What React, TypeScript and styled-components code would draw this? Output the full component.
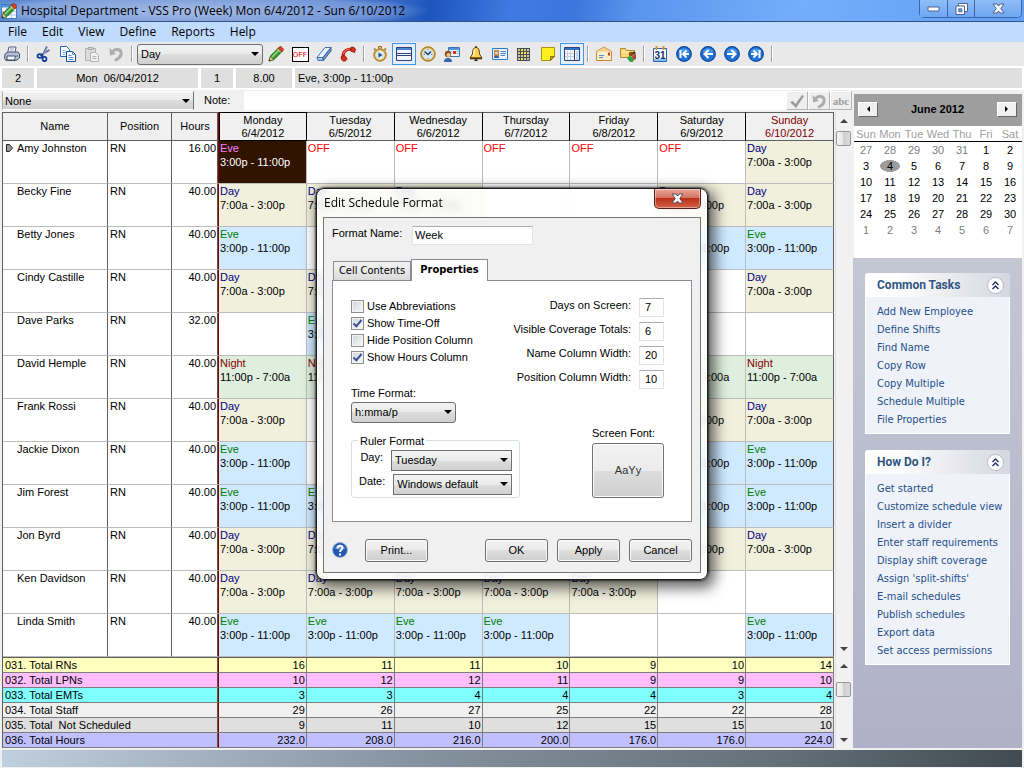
import React from "react";
import styled, { createGlobalStyle, css } from "styled-components";

const grid = '"Liberation Sans", Arial, sans-serif';
const segoe = '"Open Sans", "Noto Sans", sans-serif';
const tahoma = '"DejaVu Sans Condensed", "Noto Sans", sans-serif';
const headingFont = 'Roboto, "Noto Sans", sans-serif';

const GlobalStyle = createGlobalStyle`
  *, *::before, *::after { box-sizing: border-box; }
  body { margin: 0; background: #f0f0f0; color: #000; font: 11px/14px ${grid}; }
  button, input, select { font: inherit; color: inherit; margin: 0; }
  button { padding: 0; }
`;

/* ---------- window frame ---------- */

const Window = styled.div`
  position: relative;
  display: flex;
  flex-direction: column;
  min-height: 100vh;
  overflow: hidden;
`;

const TitleBar = styled.header`
  display: flex;
  height: 22px;
  padding-left: 1px;
  border-bottom: 1px solid #34507f;
  background:
    radial-gradient(ellipse 230px 18px at 200px 11px, rgba(255, 255, 255, 0.5), rgba(255, 255, 255, 0.25) 80%, transparent),
    linear-gradient(100deg, #5b86d0 0%, #3a6cc8 38%, #1d55bd 42%, #3f7be0 50%, #3b76dc 56%, #5a95ee 62%, #74aefa 78%, #5f9ff5 100%);
`;

const TitleText = styled.h1`
  flex: 1;
  margin: 0;
  padding-left: 4px;
  font: 12px/21px ${segoe};
  white-space: nowrap;
`;

const CaptionButtons = styled.div`
  display: flex;
  height: 18px;
  margin-right: 2px;
  border: 1px solid #3c66a4;
  border-top: 0;
  border-radius: 0 0 5px 5px;
  box-shadow: inset 0 -1px 0 #a7cbfb;
`;

const CaptionButton = styled.button<{ $wide?: boolean }>`
  display: grid;
  place-items: center;
  width: ${(p) => (p.$wide ? 47 : 27)}px;
  border: 0;
  background: linear-gradient(#8fbdf8, #6ea6f2);
  & + & { border-left: 1px solid #3c66a4; }
  &:last-child { border-radius: 0 0 5px 0; }
`;

const MenuBar = styled.nav`
  display: flex;
  gap: 15px;
  height: 20px;
  padding-left: 8px;
  background: #bfdbff;
`;

const MenuItem = styled.button`
  border: 0;
  background: none;
  font: 12px/20px ${segoe};
`;

/* ---------- toolbar ---------- */

const Toolbar = styled.div`
  display: flex;
  align-items: center;
  height: 24px;
  background: #e9e9e9;
`;

const ToolButton = styled.button<{ $on?: boolean }>`
  display: grid;
  place-items: center;
  width: 24px;
  height: 22px;
  border: 1px solid ${(p) => (p.$on ? "#3f97f0" : "transparent")};
  background: ${(p) => (p.$on ? "#e4effb" : "none")};
`;

const Separator = styled.span`
  width: 2px;
  height: 16px;
  margin: 0 3px;
  border-left: 1px solid #a5a5a5;
  border-right: 1px solid #fff;
`;

const OffBadge = styled.span`
  width: 17px;
  height: 15px;
  border: 1px solid #000;
  background: #fff;
  color: #e80000;
  font: 8px/13px Roboto, sans-serif;
  text-align: center;
`;

const SelectBox = styled.span<{ $width: number; $square?: boolean }>`
  position: relative;
  display: block;
  width: ${(p) => p.$width}px;
  &::after {
    content: "";
    position: absolute;
    right: 4px;
    top: 50%;
    margin-top: -2px;
    border: 4px solid transparent;
    border-top-color: #000;
    border-bottom: 0;
    pointer-events: none;
  }
  select {
    appearance: none;
    display: block;
    width: 100%;
    height: 21px;
    padding: 0 16px 0 3px;
    border: 1px solid #707070;
    border-radius: ${(p) => (p.$square ? 0 : 3)}px;
    background: linear-gradient(#f2f2f2, #ebebeb 50%, #dddddd 50%, #cfcfcf);
    line-height: 18px;
  }
`;

const ToolSelect = styled(SelectBox)`
  margin: 0 1px;
`;

const InfoBar = styled.div`
  display: flex;
  gap: 3px;
  padding: 2px;
  background: #fff;
`;

const InfoCell = styled.div<{ $width?: number }>`
  ${(p) => (p.$width ? css`width: ${p.$width}px; text-align: center;` : css`flex: 1; padding-left: 3px;`)}
  background: #dfdfdf;
  line-height: 20px;
  white-space: pre;
`;

/* ---------- content ---------- */

const Content = styled.div`
  display: flex;
  flex: 1;
`;

const Main = styled.main`
  flex: 1;
  min-width: 0;
`;

const NoteBar = styled.div`
  display: flex;
  align-items: stretch;
  height: 22px;
  padding: 1px 0 2px 2px;
  select {
    height: 19px;
    padding-left: 2px;
    border-color: #fff #707070 #fff #aaa;
  }
`;

const NoteLabel = styled.label`
  width: 50px;
  padding-left: 10px;
  line-height: 19px;
`;

const NoteInput = styled.input`
  flex: 1;
  min-width: 0;
  border: 0;
  background: #fff;
`;

const NoteButton = styled.button`
  display: grid;
  place-items: center;
  width: 22px;
  border: 1px solid #b4b4b4;
  border-left-color: #fff;
  border-top-color: #fff;
  background: #efefef;
  color: #9a9a9a;
  font: bold 11px/14px "Liberation Serif", serif;
`;

const Pane = styled.div`
  display: flex;
  gap: 1px;
  padding-left: 2px;
`;

const Table = styled.table`
  flex: 1;
  table-layout: fixed;
  width: 100%;
  border-collapse: separate;
  border-spacing: 0;
  border-left: 1px solid #5f5f5f;
  background: #fff;
  white-space: pre;
  td, th { padding: 0; font-weight: normal; vertical-align: top; overflow: hidden; }
`;

const weekStart = css`
  border-right: 1px solid #800000;
  box-shadow: inset -1px 0 0 #6a5050;
`;

const HeadCell = styled.th<{ $kind: "fixed" | "edge" | "day" | "current" | "sunday" }>`
  height: 29px;
  border: 1px solid #5f5f5f;
  border-left: 0;
  background: #f0f0f0;
  line-height: 13px;
  &&& {
    vertical-align: middle;
    padding-bottom: ${(p) => (p.$kind === "fixed" || p.$kind === "edge" ? 1 : 0)}px;
    padding-top: ${(p) => (p.$kind === "fixed" || p.$kind === "edge" ? 0 : 1)}px;
  }
  ${(p) => p.$kind === "edge" && weekStart}
  ${(p) => p.$kind === "day" && css`border-right-color: #000;`}
  ${(p) => p.$kind === "current" && css`border: 1px solid #000;`}
  ${(p) => p.$kind === "sunday" && css`color: #800000;`}
`;

const FixedCell = styled.td<{ $kind?: "name" | "hours" }>`
  height: 43px;
  border-right: 1px solid #5f5f5f;
  border-bottom: 1px solid #bcbcbc;
  &&& { padding: 0 2px; }
  ${(p) => p.$kind === "hours" && css`
    ${weekStart}
    text-align: right;
  `}
`;

const RowMark = styled.span`
  display: inline-block;
  width: 12px;
  height: 11px;
  padding-top: 1px;
  vertical-align: top;
`;

type Shift = "D" | "E" | "N" | "O" | "S" | "-";

const shiftStyle: Record<Shift, { bg: string; name: string; color: string; time: string }> = {
  D: { bg: "#f1f0dd", name: "Day", color: "#000080", time: "7:00a - 3:00p" },
  E: { bg: "#cfe9ff", name: "Eve", color: "#008000", time: "3:00p - 11:00p" },
  N: { bg: "#dfefde", name: "Night", color: "#800000", time: "11:00p - 7:00a" },
  O: { bg: "#ffffff", name: "OFF", color: "#ff0000", time: "" },
  S: { bg: "#301400", name: "Eve", color: "#ff7fff", time: "3:00p - 11:00p" },
  "-": { bg: "#ffffff", name: "", color: "#000", time: "" },
};

const ShiftCell = styled.td<{ $shift: Shift }>`
  border-right: 1px solid #bcbcbc;
  border-bottom: 1px solid #bcbcbc;
  background: ${(p) => shiftStyle[p.$shift].bg};
  color: ${(p) => (p.$shift === "S" ? "#fff" : "#000")};
  &&& { padding: 0 1px; }
  &:last-child { border-right-color: #5f5f5f; }
`;

const ShiftName = styled.div<{ $shift: Shift }>`
  color: ${(p) => shiftStyle[p.$shift].color};
`;

const TotalCell = styled.td<{ $color: string; $label?: boolean }>`
  height: 15px;
  border-right: 1px solid #7d7d7d;
  border-bottom: 1px solid #7d7d7d;
  background: ${(p) => p.$color};
  text-align: right;
  line-height: 14px;
  &&& { padding-right: 1px; }
  ${(p) => p.$label && css`
    ${weekStart}
    text-align: left;
    &&& { padding-left: 2px; }
  `}
`;

const TotalsTable = styled(Table)`
  border-top: 1px solid #5f5f5f;
`;

const ScrollTrack = styled.div<{ $thumb: number }>`
  display: flex;
  flex-direction: column;
  width: 17px;
  border-left: 1px solid #e2e2e2;
  background: #f1f1f1;
  &::before { content: ""; order: 1; height: ${(p) => p.$thumb}px; }
`;

const ScrollArrow = styled.button<{ $down?: boolean }>`
  display: grid;
  place-items: center;
  order: ${(p) => (p.$down ? 4 : 0)};
  margin-top: ${(p) => (p.$down ? "auto" : 0)};
  width: 16px;
  height: 17px;
  border: 0;
  background: none;
  &::after {
    content: "";
    border: 4px solid transparent;
    ${(p) => (p.$down ? "border-top-color: #444; border-bottom: 0;" : "border-bottom-color: #444; border-top: 0;")}
  }
`;

const ScrollThumb = styled.div`
  order: 2;
  width: 15px;
  height: 15px;
  border: 1px solid #979797;
  border-radius: 2px;
  background: linear-gradient(90deg, #f4f4f4, #e4e4e4 50%, #cfcfcf 50%, #dadada);
`;

/* ---------- side panel ---------- */

const Side = styled.aside`
  display: flex;
  flex-direction: column;
  width: 172px;
  padding: 4px 2px 0 1px;
`;

const Calendar = styled.section`
  margin-left: 1px;
  height: 164px;
  background: #fff;
`;

const CalendarHead = styled.div`
  display: flex;
  align-items: center;
  justify-content: space-between;
  height: 32px;
  padding: 0 5px 2px 4px;
  background: #9e9e9e;
  font-weight: bold;
`;

const CalendarButton = styled.button<{ $dir: "left" | "right" }>`
  display: grid;
  place-items: center;
  width: 20px;
  height: 15px;
  border: 1px solid #fff;
  border-right-color: #666;
  border-bottom-color: #666;
  background: #f0f0f0;
  &::after {
    content: "";
    border: 3px solid transparent;
    ${(p) => (p.$dir === "left" ? "border-right-color: #000; border-left: 0;" : "border-left-color: #000; border-right: 0;")}
  }
`;

const CalendarTable = styled.table`
  table-layout: fixed;
  width: 100%;
  border-collapse: separate;
  border-spacing: 0;
  text-align: center;
  th { height: 16px; padding: 0; color: #a0a0a0; font-weight: normal; border-bottom: 1px solid #000; }
  td { height: 16px; padding: 0; }
`;

const CalDay = styled.td<{ $dim?: boolean; $today?: boolean }>`
  color: ${(p) => (p.$dim ? "#808080" : "#000")};
  ${(p) => p.$today && css`
    background: radial-gradient(ellipse 10px 6px at center, #9c9c9c 97%, transparent);
  `}
`;

const Tasks = styled.div`
  flex: 1;
  display: flex;
  flex-direction: column;
  gap: 16px;
  padding: 15px 12px 0;
  background: linear-gradient(#c3c7d4, #b0b1c8);
`;

const Card = styled.section`
  border-radius: 3px 3px 0 0;
  overflow: hidden;
`;

const CardHead = styled.div`
  display: flex;
  align-items: center;
  justify-content: space-between;
  height: 24px;
  padding: 0 6px 0 12px;
  background: linear-gradient(90deg, #fff 20%, #d5d6e0);
`;

const CardTitle = styled.h2`
  margin: 0;
  color: #2f5580;
  font: bold 12px/24px ${headingFont};
`;

const Collapse = styled.button`
  display: grid;
  place-items: center;
  width: 17px;
  height: 17px;
  border: 1px solid #b8b9c8;
  border-radius: 50%;
  background: #fff;
`;

const LinkList = styled.ul`
  margin: 0;
  padding: 6px 0 4px 11px;
  border: 1px solid #fff;
  border-top: 0;
  background: #eff2f8;
  list-style: none;
`;

const TaskLink = styled.a`
  display: block;
  color: #24508c;
  font: 11px/18px ${tahoma};
  text-decoration: none;
  white-space: nowrap;
`;

const StatusStrip = styled.footer`
  height: 17px;
  margin: 2px 2px 1px;
  background: linear-gradient(90deg, #c0cfdd, #8693a0 40%, #65727a 75%, #414b51);
`;

const BottomEdge = styled.div`
  height: 1px;
  background: #4e4e4e;
`;

/* ---------- dialog ---------- */

const Overlay = styled.div`
  position: absolute;
  inset: 0;
  display: grid;
  place-items: center;
  padding-bottom: 2px;
`;

const Dialog = styled.section`
  display: flex;
  flex-direction: column;
  width: 392px;
  padding: 0 6px 6px;
  border: 1px solid #1c1c1c;
  border-radius: 8px;
  background: rgba(255, 255, 255, 0.78);
  backdrop-filter: blur(4px);
  box-shadow: inset 0 0 0 1px rgba(255, 255, 255, 0.8), 0 0 2px 1px rgba(0, 0, 0, 0.6), 4px 5px 14px 3px rgba(0, 0, 0, 0.6);
  white-space: nowrap;
`;

const DialogHead = styled.div`
  display: flex;
  justify-content: space-between;
  height: 28px;
`;

const DialogTitle = styled.h2`
  margin: 0;
  padding-left: 1px;
  font: 12px/28px ${segoe};
`;

const CloseButton = styled.button`
  display: grid;
  place-items: center;
  width: 47px;
  height: 20px;
  border: 1px solid #5c1a12;
  border-top: 0;
  border-radius: 0 0 5px 5px;
  background: linear-gradient(#e9a79a, #d4705c 48%, #bb3019 50%, #d2634a);
  box-shadow: inset 0 0 0 1px rgba(255, 255, 255, 0.4);
`;

const DialogBody = styled.div`
  display: flex;
  flex-direction: column;
  padding: 8px 8px 10px;
  border: 1px solid #757575;
  background: #f0f0f0;
`;

const NameRow = styled.div`
  display: flex;
  align-items: flex-start;
  height: 33px;
  label { width: 80px; }
`;

const TextBox = styled.input<{ $width: number }>`
  width: ${(p) => p.$width}px;
  height: 19px;
  padding: 0 0 0 2px;
  border: 1px solid #e0e3ea;
  border-top-color: #abadb3;
  background: #fff;
`;

const Tabs = styled.div`
  display: flex;
  align-items: flex-end;
  padding-left: 1px;
`;

const Tab = styled.button<{ $active?: boolean }>`
  width: ${(p) => (p.$active ? 77 : 78)}px;
  height: ${(p) => (p.$active ? 22 : 19)}px;
  border: 1px solid #8a8c96;
  border-bottom: 0;
  background: ${(p) => (p.$active ? "#fff" : "linear-gradient(#f2f2f2, #e8e8e8 50%, #dadada)")};
  font: ${(p) => (p.$active ? "bold" : "normal")} 11px/18px ${tahoma};
  white-space: nowrap;
  ${(p) => p.$active && css`position: relative; margin-bottom: -1px;`}
`;

const Panel = styled.div`
  display: flex;
  justify-content: space-between;
  height: 242px;
  padding: 17px 27px 0 18px;
  border: 1px solid #8a8c96;
  background: #fff;
`;

const LeftColumn = styled.div`
  flex: none;
  width: 169px;
`;

const RightColumn = styled.div`
  flex: none;
  display: flex;
  flex-direction: column;
  align-items: flex-end;
  width: 144px;
`;

const Check = styled.label`
  display: flex;
  align-items: center;
  gap: 3px;
  height: 17px;
`;

const CheckBox = styled.input`
  appearance: none;
  display: grid;
  place-items: center;
  width: 13px;
  height: 13px;
  border: 1px solid #8e8f8f;
  background: linear-gradient(135deg, #cfd3d8, #fafafa);
  box-shadow: inset 0 0 0 1px #f4f4f4;
  &:checked::after {
    content: "";
    width: 5px;
    height: 9px;
    margin-top: -2px;
    border: solid #3a539b;
    border-width: 0 2px 2px 0;
    transform: rotate(40deg);
  }
`;

const FieldLabel = styled.label`
  display: block;
  margin: 20px 0 2px;
  line-height: 14px;
`;

const Fieldset = styled.fieldset`
  min-width: 0;
  margin: 11px 0 0;
  padding: 2px 7px;
  border: 1px solid #d5dfe5;
  border-radius: 3px;
  legend { padding: 0 2px; margin-left: -1px; line-height: 14px; }
`;

const RulerRow = styled.div`
  display: flex;
  justify-content: flex-end;
  gap: 8px;
  height: 21px;
  & + & { margin-top: 3px; }
`;

const NumberRow = styled.div`
  display: flex;
  gap: 8px;
  height: 24px;
  label { line-height: 14px; }
  input { padding-left: 5px; }
`;

const FontField = styled.div`
  display: flex;
  flex-direction: column;
  align-items: flex-start;
  gap: 3px;
  margin-top: 32px;
`;

const face = css`
  border: 1px solid #707070;
  border-radius: 3px;
  background: linear-gradient(#f2f2f2, #ebebeb 50%, #dddddd 50%, #cfcfcf);
  box-shadow: inset 0 0 0 1px #fafafa;
`;

const FontButton = styled.button`
  ${face}
  width: 72px;
  height: 55px;
  color: #333;
`;

const ButtonRow = styled.div`
  display: flex;
  align-items: center;
  gap: 9px;
  margin-top: 17px;
`;

const DialogButton = styled.button`
  ${face}
  width: 63px;
  height: 23px;
`;

const PrintButton = styled(DialogButton)`
  margin: 0 auto 0 8px;
`;

const HelpButton = styled.button`
  height: 16px;
  border: 0;
  background: none;
  line-height: 0;
`;

/* ---------- icons ---------- */

const Icon = ({ children }: { children: React.ReactNode }) => (
  <svg width="16" height="16" viewBox="0 0 16 16" fill="none" aria-hidden="true">
    {children}
  </svg>
);

const Pencil = () => (
  <>
    <path d="M1 15l1.500-5L11 1.500 14.500 5 6 13.500z" fill="#3f9a36" stroke="#1c5a1c" />
    <path d="M4 11l7-7" stroke="#9fdc80" strokeWidth="1.500" />
    <path d="M10 2.500l2.500-2.500L16 3.500 13.500 6z" fill="#d8402a" stroke="#8a1f10" strokeWidth=".6" />
    <path d="M9.500 3l3.500 3.500" stroke="#e6d9a0" />
    <path d="M1 15l1.200-4.500 3.300 3.300z" fill="#f3d9a4" stroke="#5c4a20" strokeWidth=".6" />
    <path d="M1 15l.6-2 1.400 1.400z" fill="#222" />
  </>
);

const ClockFace = ({ y = 8, r = 6.500 }: { y?: number; r?: number }) => (
  <>
    <circle cx="8" cy={y} r={r} fill="#d5ebfb" stroke="#c99a34" strokeWidth="2" />
    <circle cx="8" cy={y} r={r + 0.800} stroke="#7d5a12" strokeWidth=".5" />
    <circle cx="8" cy={y} r={r - 1} stroke="#f6e3a0" strokeWidth=".7" />
  </>
);

const NavDisc = ({ children }: { children: React.ReactNode }) => (
  <Icon>
    <circle cx="8" cy="8" r="7.300" fill="#1c73d8" stroke="#0d469c" strokeWidth="1.200" />
    <path d="M2.500 6a6 6 0 0 1 11 0q-5 2-11 0z" fill="#5fb0f5" opacity=".6" />
    <g stroke="#fff" strokeWidth="2">{children}</g>
  </Icon>
);

const icons: Record<string, React.ReactNode> = {
  Print: (
    <Icon>
      <path d="M5 1h7l-1 6H3.500z" fill="#fff" stroke="#50587c" />
      <path d="M1 8l3-2h10l1.500 2v4L12 14.500H2L.500 12z" fill="#b9bfd8" stroke="#454d72" />
      <path d="M3 10h8.500l-1 4H3z" fill="#f6f7fb" stroke="#454d72" />
      <path d="M6 3h4M5.500 5h4" stroke="#8f96b4" />
      <path d="M12.500 10h1.500" stroke="#2e8f3a" strokeWidth="1.500" />
    </Icon>
  ),
  Cut: (
    <Icon>
      <path d="M11 .500L6.500 10M13.500 4L4 9.500" stroke="#5b6c98" strokeWidth="2" />
      <path d="M11.500 1L7 10" stroke="#b9c4de" strokeWidth=".8" />
      <ellipse cx="3.800" cy="10" rx="2.300" ry="1.800" stroke="#123a9a" strokeWidth="1.800" />
      <ellipse cx="8.500" cy="13" rx="2" ry="2.200" stroke="#123a9a" strokeWidth="1.800" />
    </Icon>
  ),
  Copy: (
    <Icon>
      <path d="M.500.500h6l3 3v7h-9z" fill="#fff" stroke="#2466b8" />
      <path d="M2.500 4.500h3M2.500 6.500h4M2.500 8.500h3" stroke="#78b3ea" />
      <path d="M6.500 5.500h6l3 3v7h-9z" fill="#fff" stroke="#1b4f9e" />
      <path d="M12.500 5.500v3h3M8.500 9.500h3M8.500 11.500h5M8.500 13.500h5" stroke="#4b90d8" />
    </Icon>
  ),
  Paste: (
    <Icon>
      <path d="M1.500 2.500h10v12h-10z" fill="#dcdcdc" stroke="#b2b2b2" />
      <path d="M4 3.500v-2h5v2z" fill="#cfcfcf" stroke="#a8a8a8" />
      <path d="M6.500 6.500h5l3 3v6h-8z" fill="#f0f0f0" stroke="#b2b2b2" />
      <path d="M8.500 10.500h4M8.500 12.500h4" stroke="#b2b2b2" />
    </Icon>
  ),
  Undo: (
    <Icon>
      <path d="M4 6.500C7 1.500 14 3 13 8.500 12.500 12 9 13 7 14.500" stroke="#adadad" strokeWidth="3" />
      <path d="M1.500 2l.500 7.500 6-1.500z" fill="#adadad" />
    </Icon>
  ),
  "Edit shift": <Icon><Pencil /></Icon>,
  Off: <OffBadge>OFF</OffBadge>,
  Erase: (
    <Icon>
      <path d="M1 11.500L9 1.500h6l-8 10z" fill="#e8f2fd" stroke="#4a6fae" />
      <path d="M1 11.500h6v3H2z" fill="#a9c6ec" stroke="#4a6fae" />
      <path d="M7 11.500l8-10v3.500l-7.500 9.500z" fill="#6c97d4" stroke="#3c5f9e" />
    </Icon>
  ),
  Call: (
    <Icon>
      <path d="M3 11.500C2.500 5.500 6.500 2.500 12 3.500" stroke="#c8200e" strokeWidth="3" />
      <path d="M11 1.200q3.500-.8 4.500 2l-.8 3.300-3.700-1.200z" fill="#dd3018" stroke="#8a1408" strokeWidth=".8" />
      <path d="M1 11l3.500-1.700 2.800 3.500q-1.300 2.700-3.500 2.400Q1 14.500 1 11z" fill="#dd3018" stroke="#8a1408" strokeWidth=".8" />
      <path d="M3.300 8C4.300 4.800 6.500 3.200 9.500 3" stroke="#f59080" />
    </Icon>
  ),
  Timer: (
    <Icon>
      <path d="M6.500 2.500v-2h3v2" fill="#e8c060" stroke="#9a6c14" />
      <path d="M2 4l1.500-1.500M14 4l-1.500-1.500" stroke="#9a6c14" strokeWidth="1.500" />
      <ClockFace y={9} r={5.500} />
      <path d="M6.500 6.500l4 2.500-4 2.500z" fill="#234f86" />
    </Icon>
  ),
  "Split view": (
    <Icon>
      <path d="M.500 1.500h15v13H.500z" fill="#f2f6fc" stroke="#2d3f7c" />
      <path d="M1 2h14v2H1z" fill="#4a85d4" />
      <path d="M.500 7.500h15M.500 9.500h15" stroke="#2d3f7c" />
    </Icon>
  ),
  Clock: (
    <Icon>
      <ClockFace />
      <path d="M4.500 5.500L8 8.500l3-3" stroke="#1f3f6d" strokeWidth="1.500" />
      <path d="M8 3v1.500M8 12v1.500M3.500 8.500H5M11 8.500h1.500" stroke="#5c86b4" />
    </Icon>
  ),
  "Employee schedule": (
    <Icon>
      <path d="M4.500 1.500h11v9h-11z" fill="#eaf3fd" stroke="#3c72b8" />
      <path d="M5 2h10v2H5z" fill="#4f92dc" />
      <path d="M9 5h3v3H9z" fill="#d03020" />
      <path d="M12.500 5.500h2M6.500 5.500h1.500M12.500 7.500h2" stroke="#7fa8d8" />
      <circle cx="4" cy="8" r="3.200" fill="#8a5020" />
      <circle cx="4.500" cy="9" r="2" fill="#f2c48c" />
      <path d="M0 16q0-4 4-4t4 4z" fill="#3568b0" />
    </Icon>
  ),
  Alerts: (
    <Icon>
      <path d="M8 1c-3 1-3.500 4-3.500 7L2 12h12l-2.500-4c0-3-.500-6-3.500-7z" fill="#f7d257" stroke="#6a3c0c" />
      <path d="M7 3c-1 1-1 4-1.500 7" stroke="#fff3b8" strokeWidth="1.500" />
      <path d="M2 12.500h12M8 0v2" stroke="#4b2a08" strokeWidth="1.400" />
      <path d="M6.500 13.500h3v1.500h-3z" fill="#1f1204" />
    </Icon>
  ),
  "Employee card": (
    <Icon>
      <path d="M.500 2.500h15v11H.500z" fill="#eaf4fe" stroke="#2f78c8" />
      <path d="M2 4h5v7H2z" fill="#b8864a" />
      <circle cx="4.500" cy="7" r="1.600" fill="#f5cf9d" />
      <path d="M2 11q2.500-3 5 0v1H2z" fill="#2f62ac" />
      <path d="M8.500 5.500H14M8.500 7.500H14M8.500 9.500H13" stroke="#4a86cf" />
    </Icon>
  ),
  Grid: (
    <Icon>
      <path d="M1 2h13v13H1z" fill="#c4c4c0" />
      <path d="M4 2h3v6H4zM7 5h3v6H7zM4 11h3v4H4z" fill="#f5e63a" />
      <path d="M1.500 2v13M4.500 2v13M7.500 2v13M10.500 2v13M13.500 2v13M1 2.500h13M1 5.500h13M1 8.500h13M1 11.500h13M1 14.500h13" stroke="#4e4e48" />
    </Icon>
  ),
  Note: (
    <Icon>
      <path d="M1.500 1.500h13v9l-4 4h-9z" fill="#ffee22" stroke="#a89410" />
      <path d="M14.500 10.500h-4v4z" fill="#c99c10" stroke="#8a7408" />
    </Icon>
  ),
  "Calendar panel": (
    <Icon>
      <path d="M.500 1.500h15v13H.500z" fill="#f6f8fc" stroke="#2d3f7c" />
      <path d="M1 2h14v2H1z" fill="#2f72cc" />
      <path d="M10.500 4v10" stroke="#2d3f7c" />
      <path d="M12 5h2.500v9H12z" fill="#b9d6f2" />
      <path d="M3.500 5v9M6.500 5v9M1 7.500h9M1 10.500h9" stroke="#c3cfe0" />
    </Icon>
  ),
  "E-mail": (
    <Icon>
      <path d="M.500 5.500L8 1l7.500 4.500v9H.500z" fill="#fdeecb" stroke="#c88a30" />
      <path d="M1 5.500L8 1.500l7 4z" fill="#f3cf86" />
      <path d="M12 6.500h2v3h-2z" fill="#d43a20" />
      <path d="M3 9.500h5M3 11.500h4" stroke="#4c90d4" />
    </Icon>
  ),
  "Shared folder": (
    <Icon>
      <path d="M.500 2.500h5l1 2h8v7H.500z" fill="#f7d774" stroke="#b5882a" />
      <path d="M1 6h13" stroke="#fff1b4" />
      <circle cx="11" cy="8" r="2.300" fill="#8a4c18" />
      <circle cx="14" cy="7" r="1.600" fill="#40302a" />
      <path d="M7 12q3-4 6 0l1 1-1 3h-3z" fill="#35a045" />
      <path d="M12 10l4-2v5l-2 1z" fill="#b8402a" />
    </Icon>
  ),
  Month: (
    <Icon>
      <path d="M1.500 2.500h13v13h-13z" fill="#fff" stroke="#2b62b0" />
      <path d="M2 13h12v2H2z" fill="#8fc0ee" />
      <path d="M4.500 0v4M11.500 0v4" stroke="#d29a34" strokeWidth="2" />
      <text x="8" y="13" textAnchor="middle" fill="#1b2f6e" fontFamily="Liberation Sans" fontWeight="bold" fontSize="10">31</text>
    </Icon>
  ),
  First: <NavDisc><path d="M4.500 4v8M13 8H8M10.500 4.500L7 8l3.500 3.500" /></NavDisc>,
  Previous: <NavDisc><path d="M13 8H5M8.500 4L4.500 8l4 4" /></NavDisc>,
  Next: <NavDisc><path d="M3 8h8M7.500 4l4 4-4 4" /></NavDisc>,
  Last: <NavDisc><path d="M11.500 4v8M3 8h5M5.500 4.500L9 8l-3.500 3.500" /></NavDisc>,
};

const CloseGlyph = ({ edge }: { edge: string }) => (
  <svg width="13" height="11" viewBox="0 0 13 11" aria-hidden="true">
    <path d="M1 1h4l1.500 2L8 1h4L8.800 5.500 12 10H8L6.500 8 5 10H1l3.200-4.500z" fill="#f6f8fa" stroke={edge} />
  </svg>
);

const Chevrons = () => (
  <svg width="9" height="9" viewBox="0 0 9 9" fill="none" stroke="#1f2f6a" strokeWidth="1.400" aria-hidden="true">
    <path d="M1.500 4l3-3 3 3M1.500 8l3-3 3 3" />
  </svg>
);

const Tool = ({ name, on }: { name: string; on?: boolean }) => (
  <ToolButton $on={on} type="button" aria-label={name}>
    {icons[name]}
  </ToolButton>
);

/* ---------- data ---------- */

const days = [
  ["Monday", "6/4/2012"],
  ["Tuesday", "6/5/2012"],
  ["Wednesday", "6/6/2012"],
  ["Thursday", "6/7/2012"],
  ["Friday", "6/8/2012"],
  ["Saturday", "6/9/2012"],
  ["Sunday", "6/10/2012"],
];

const staff: [string, string, string][] = [
  ["Amy Johnston", "16.00", "SOOOOOD"],
  ["Becky Fine", "40.00", "DDD--DD"],
  ["Betty Jones", "40.00", "E----EE"],
  ["Cindy Castille", "40.00", "DD----D"],
  ["Dave Parks", "32.00", "-E-----"],
  ["David Hemple", "40.00", "NN---NN"],
  ["Frank Rossi", "40.00", "D----DD"],
  ["Jackie Dixon", "40.00", "E----EE"],
  ["Jim Forest", "40.00", "EE---EE"],
  ["Jon Byrd", "40.00", "DD---DD"],
  ["Ken Davidson", "40.00", "DDDDD--"],
  ["Linda Smith", "40.00", "EEEE--E"],
];

const totals: [string, string, string[]][] = [
  ["031. Total RNs", "#ffffbf", ["16", "11", "11", "10", "9", "10", "14"]],
  ["032. Total LPNs", "#ffbfff", ["10", "12", "12", "11", "9", "9", "10"]],
  ["033. Total EMTs", "#80ffff", ["3", "3", "4", "4", "4", "3", "4"]],
  ["034. Total Staff", "#f0f0f0", ["29", "26", "27", "25", "22", "22", "28"]],
  ["035. Total  Not Scheduled", "#dfdfdf", ["9", "11", "10", "12", "15", "15", "10"]],
  ["036. Total Hours", "#bfbfff", ["232.0", "208.0", "216.0", "200.0", "176.0", "176.0", "224.0"]],
];

const monthCells = Array.from({ length: 42 }, (_, i) => {
  const n = i - 4;
  if (n < 1) return { n: n + 31, dim: true };
  if (n > 30) return { n: n - 30, dim: true };
  return { n, dim: false };
});

const cards: [string, string[]][] = [
  ["Common Tasks", ["Add New Employee", "Define Shifts", "Find Name", "Copy Row", "Copy Multiple", "Schedule Multiple", "File Properties"]],
  ["How Do I?", [
    "Get started", "Customize schedule view", "Insert a divider", "Enter staff requirements", "Display shift coverage",
    "Assign 'split-shifts'", "E-mail schedules", "Publish schedules", "Export data", "Set access permissions",
  ]],
];

/* ---------- parts ---------- */

const Scrollbar = ({ thumb }: { thumb: number }) => (
  <ScrollTrack $thumb={thumb}>
    <ScrollArrow type="button" aria-label="Scroll up" />
    <ScrollThumb />
    <ScrollArrow type="button" aria-label="Scroll down" $down />
  </ScrollTrack>
);

const NameCol = styled.col`width: 105px;`;
const PositionCol = styled.col`width: 64px;`;
const HoursCol = styled.col`width: 47px;`;

const Columns = () => (
  <colgroup>
    <NameCol />
    <PositionCol />
    <HoursCol />
    {days.map(([d]) => <col key={d} />)}
  </colgroup>
);

const Schedule = () => (
  <Pane>
    <Table>
      <Columns />
      <thead>
        <tr>
          <HeadCell $kind="fixed">Name</HeadCell>
          <HeadCell $kind="fixed">Position</HeadCell>
          <HeadCell $kind="edge">Hours</HeadCell>
          {days.map(([day, date], i) => (
            <HeadCell key={day} $kind={i === 0 ? "current" : i === 6 ? "sunday" : "day"}>
              {day}<br />{date}
            </HeadCell>
          ))}
        </tr>
      </thead>
      <tbody>
        {staff.map(([name, hours, week], r) => (
          <tr key={name}>
            <FixedCell $kind="name">
              <RowMark>
                {r === 0 && (
                  <svg width="9" height="10" viewBox="0 0 9 10" aria-hidden="true">
                    <path d="M1.500 1.500h3l3 3.500-3 3.500h-3z" fill="#999" stroke="#222" />
                  </svg>
                )}
              </RowMark>
              {name}
            </FixedCell>
            <FixedCell>RN</FixedCell>
            <FixedCell $kind="hours">{hours}</FixedCell>
            {(week.split("") as Shift[]).map((s, i) => (
              <ShiftCell key={i} $shift={s}>
                <ShiftName $shift={s}>{shiftStyle[s].name}</ShiftName>
                {shiftStyle[s].time}
              </ShiftCell>
            ))}
          </tr>
        ))}
      </tbody>
    </Table>
    <Scrollbar thumb={2} />
  </Pane>
);

const Totals = () => (
  <Pane>
    <TotalsTable>
      <Columns />
      <tbody>
        {totals.map(([label, color, values]) => (
          <tr key={label}>
            <TotalCell as="th" scope="row" colSpan={3} $color={color} $label>{label}</TotalCell>
            {values.map((v, i) => <TotalCell key={i} $color={color}>{v}</TotalCell>)}
          </tr>
        ))}
      </tbody>
    </TotalsTable>
    <Scrollbar thumb={8} />
  </Pane>
);

const MonthCalendar = () => (
  <Calendar>
    <CalendarHead>
      <CalendarButton type="button" $dir="left" aria-label="Previous month" />
      June 2012
      <CalendarButton type="button" $dir="right" aria-label="Next month" />
    </CalendarHead>
    <CalendarTable>
      <thead>
        <tr>{["Sun", "Mon", "Tue", "Wed", "Thu", "Fri", "Sat"].map((d) => <th key={d}>{d}</th>)}</tr>
      </thead>
      <tbody>
        {[0, 1, 2, 3, 4, 5].map((w) => (
          <tr key={w}>
            {monthCells.slice(w * 7, w * 7 + 7).map((c) => (
              <CalDay key={c.n} $dim={c.dim} $today={c.n === 4 && !c.dim}>{c.n}</CalDay>
            ))}
          </tr>
        ))}
      </tbody>
    </CalendarTable>
  </Calendar>
);

const checks: [string, boolean][] = [
  ["Use Abbreviations", false],
  ["Show Time-Off", true],
  ["Hide Position Column", false],
  ["Show Hours Column", true],
];

const numbers: [string, string][] = [
  ["Days on Screen:", "7"],
  ["Visible Coverage Totals:", "6"],
  ["Name Column Width:", "20"],
  ["Position Column Width:", "10"],
];

const FormatDialog = () => (
  <Overlay>
    <Dialog role="dialog" aria-labelledby="dialog-title">
      <DialogHead>
        <DialogTitle id="dialog-title">Edit Schedule Format</DialogTitle>
        <CloseButton type="button" aria-label="Close"><CloseGlyph edge="#5a4a55" /></CloseButton>
      </DialogHead>
      <DialogBody>
        <NameRow>
          <label htmlFor="format-name">Format Name:</label>
          <TextBox id="format-name" $width={121} defaultValue="Week" />
        </NameRow>
        <Tabs role="tablist">
          <Tab type="button" role="tab">Cell Contents</Tab>
          <Tab type="button" role="tab" aria-selected $active>Properties</Tab>
        </Tabs>
        <Panel>
          <LeftColumn>
            {checks.map(([label, on]) => (
              <Check key={label}>
                <CheckBox type="checkbox" defaultChecked={on} />
                {label}
              </Check>
            ))}
            <FieldLabel htmlFor="time-format">Time Format:</FieldLabel>
            <SelectBox $width={105}>
              <select id="time-format"><option>h:mma/p</option></select>
            </SelectBox>
            <Fieldset>
              <legend>Ruler Format</legend>
              <RulerRow>
                <label htmlFor="ruler-day">Day:</label>
                <SelectBox $width={121} $square>
                  <select id="ruler-day"><option>Tuesday</option></select>
                </SelectBox>
              </RulerRow>
              <RulerRow>
                <label htmlFor="ruler-date">Date:</label>
                <SelectBox $width={121} $square>
                  <select id="ruler-date"><option>Windows default</option></select>
                </SelectBox>
              </RulerRow>
            </Fieldset>
          </LeftColumn>
          <RightColumn>
            {numbers.map(([label, value]) => (
              <NumberRow key={label}>
                <label htmlFor={label}>{label}</label>
                <TextBox id={label} $width={25} defaultValue={value} />
              </NumberRow>
            ))}
            <FontField>
              <label htmlFor="screen-font">Screen Font:</label>
              <FontButton type="button" id="screen-font">AaYy</FontButton>
            </FontField>
          </RightColumn>
        </Panel>
        <ButtonRow>
          <HelpButton type="button" aria-label="Help">
            <svg width="16" height="16" viewBox="0 0 16 16" aria-hidden="true">
              <circle cx="8" cy="8" r="7.500" fill="#2457ae" stroke="#9fb6d8" />
              <path d="M2.500 6.500a6 6 0 0 1 11 0q-5 2-11 0z" fill="#7da7e2" opacity=".7" />
              <path d="M5.500 6.500c0-3.500 5-3.500 5-.500 0 1.800-2.500 1.800-2.500 4M8 11.500v2" fill="none" stroke="#fff" strokeWidth="2" />
            </svg>
          </HelpButton>
          <PrintButton type="button">Print...</PrintButton>
          <DialogButton type="button">OK</DialogButton>
          <DialogButton type="button">Apply</DialogButton>
          <DialogButton type="button">Cancel</DialogButton>
        </ButtonRow>
      </DialogBody>
    </Dialog>
  </Overlay>
);

export default function App() {
  return (
    <Window>
      <GlobalStyle />
      <TitleBar>
        <svg width="16" height="21" viewBox="0 -3 16 21" fill="none" aria-hidden="true">
          <path d="M.500 1.500h15v14H.500z" fill="#f4f9ff" stroke="#3f7cc4" />
          <path d="M1 2h14v2.500H1z" fill="#4f93dc" />
          <path d="M5.500 5v10M10.500 5v10M1 8.500h14M1 12h14" stroke="#b0cbe8" />
          <path d="M1.500 9h4v3h-4z" fill="#e05040" />
          <Pencil />
        </svg>
        <TitleText>Hospital Department - VSS Pro (Week) Mon 6/4/2012 - Sun 6/10/2012</TitleText>
        <CaptionButtons>
          <CaptionButton type="button" aria-label="Minimize">
            <svg width="13" height="6" viewBox="0 0 13 6"><path d="M1 1h11v4H1z" fill="#fff" stroke="#4a6390" /></svg>
          </CaptionButton>
          <CaptionButton type="button" aria-label="Restore">
            <svg width="13" height="12" viewBox="0 0 13 12" fill="#fff" stroke="#4a6390">
              <path d="M3.500.500h9v8h-9z" /><path d="M1 3h8.500v8.500H1z" /><path d="M3.800 5.800h3v3h-3z" fill="#6ea6f2" />
            </svg>
          </CaptionButton>
          <CaptionButton type="button" aria-label="Close" $wide><CloseGlyph edge="#4a6390" /></CaptionButton>
        </CaptionButtons>
      </TitleBar>
      <MenuBar>
        {["File", "Edit", "View", "Define", "Reports", "Help"].map((m) => <MenuItem key={m} type="button">{m}</MenuItem>)}
      </MenuBar>
      <Toolbar>
        <Tool name="Print" />
        <Separator />
        {["Cut", "Copy", "Paste", "Undo"].map((n) => <Tool key={n} name={n} />)}
        <Separator />
        <ToolSelect $width={126}>
          <select aria-label="Shift"><option>Day</option></select>
        </ToolSelect>
        {["Edit shift", "Off", "Erase", "Call"].map((n) => <Tool key={n} name={n} />)}
        <Separator />
        <Tool name="Timer" />
        <Tool name="Split view" on />
        {["Clock", "Employee schedule", "Alerts", "Employee card", "Grid", "Note"].map((n) => <Tool key={n} name={n} />)}
        <Tool name="Calendar panel" on />
        <Separator />
        <Tool name="E-mail" />
        <Tool name="Shared folder" />
        <Separator />
        {["Month", "First", "Previous", "Next", "Last"].map((n) => <Tool key={n} name={n} />)}
        <Separator />
      </Toolbar>
      <InfoBar>
        <InfoCell $width={32}>2</InfoCell>
        <InfoCell $width={161}>{"Mon  06/04/2012"}</InfoCell>
        <InfoCell $width={32}>1</InfoCell>
        <InfoCell $width={56}>8.00</InfoCell>
        <InfoCell>Eve, 3:00p - 11:00p</InfoCell>
      </InfoBar>
      <Content>
        <Main>
          <NoteBar>
            <SelectBox $width={192} $square>
              <select aria-label="Filter"><option>None</option></select>
            </SelectBox>
            <NoteLabel htmlFor="note">Note:</NoteLabel>
            <NoteInput id="note" />
            <NoteButton type="button" aria-label="Accept">
              <Icon><path d="M1 9l3-1 2.500 3L13 2l2 1L7 15z" fill="#9a9a9a" /></Icon>
            </NoteButton>
            <NoteButton type="button" aria-label="Revert">{icons.Undo}</NoteButton>
            <NoteButton type="button">abc</NoteButton>
          </NoteBar>
          <Schedule />
          <Totals />
        </Main>
        <Side>
          <MonthCalendar />
          <Tasks>
            {cards.map(([title, links]) => (
              <Card key={title}>
                <CardHead>
                  <CardTitle>{title}</CardTitle>
                  <Collapse type="button" aria-label={"Collapse " + title}><Chevrons /></Collapse>
                </CardHead>
                <LinkList>
                  {links.map((l) => <li key={l}><TaskLink href="#">{l}</TaskLink></li>)}
                </LinkList>
              </Card>
            ))}
          </Tasks>
        </Side>
      </Content>
      <StatusStrip />
      <BottomEdge />
      <FormatDialog />
    </Window>
  );
}
